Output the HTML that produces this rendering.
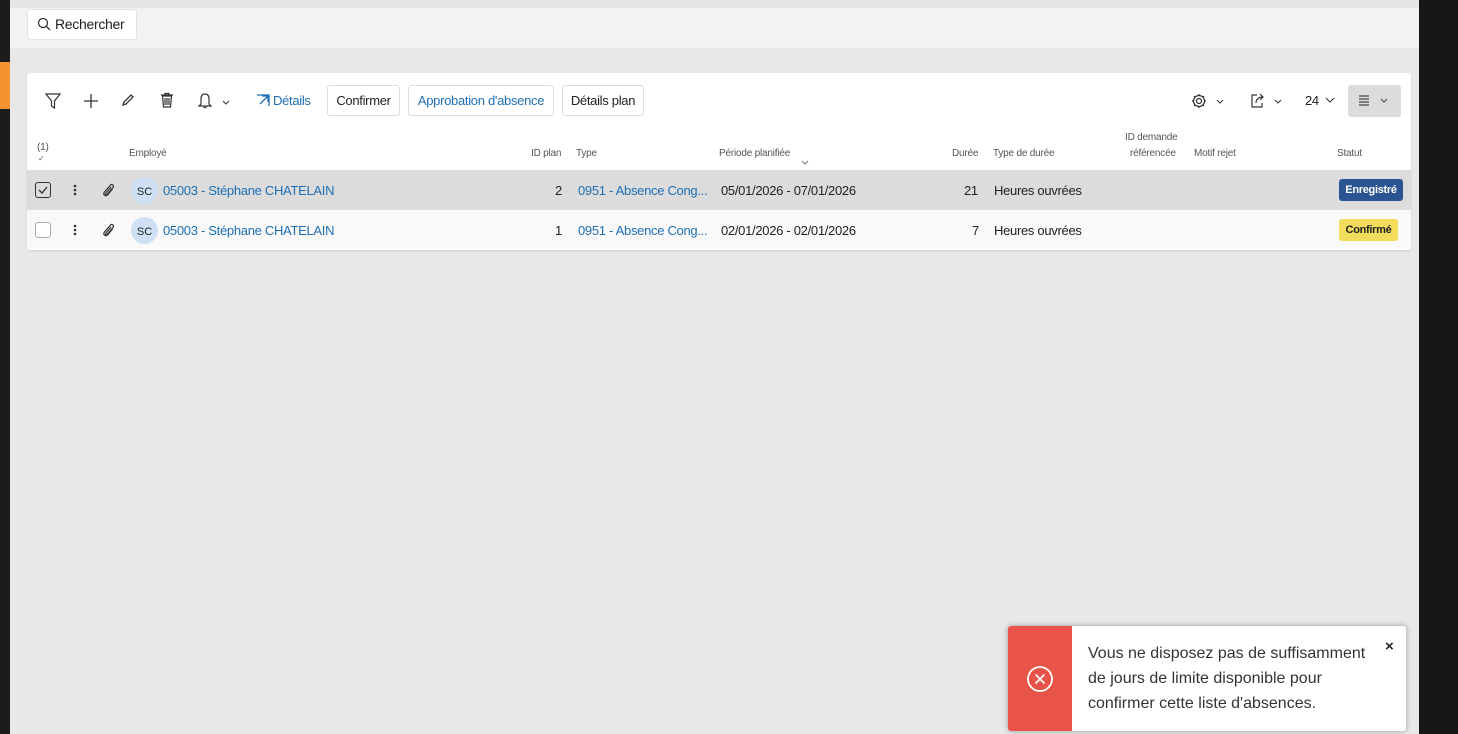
<!DOCTYPE html>
<html><head><meta charset="utf-8"><style>
*{box-sizing:border-box;margin:0;padding:0}
body{width:1458px;height:734px;overflow:hidden;background:#e8e8e8;font-family:"Liberation Sans",sans-serif;position:relative;color:#222}
.abs{position:absolute}
.t{position:absolute;white-space:nowrap;font-size:13px;letter-spacing:-0.3px}
.h{position:absolute;white-space:nowrap;font-size:10px;color:#555;letter-spacing:-0.2px}
.link{color:#1f6fb5}
.btn{position:absolute;top:85px;height:31px;border:1px solid #ddd;border-radius:3px;background:#fff;font-size:13px;line-height:29px;text-align:center;letter-spacing:-0.3px}
</style></head><body>
<div class="abs" style="left:0;top:0;width:10px;height:734px;background:#1c1c1c"></div>
<div class="abs" style="left:0;top:62px;width:10px;height:47px;background:#f6922f"></div>
<div class="abs" style="left:1419px;top:0;width:39px;height:734px;background:#161816"></div>
<div class="abs" style="left:10px;top:0;width:1409px;height:8px;background:#e6e6e6"></div>
<div class="abs" style="left:10px;top:8px;width:1409px;height:40px;background:#f2f2f3"></div>
<div class="abs" style="left:27px;top:9px;width:110px;height:31px;background:#fff;border:1px solid #e2e2e2;border-radius:3px;font-size:14px;line-height:29px;padding-left:27px;letter-spacing:-0.3px">Rechercher</div>
<svg class="abs" style="left:37px;top:17px" width="14" height="14" viewBox="0 0 14 14" fill="none" stroke="#333" stroke-width="1.3"><circle cx="6" cy="6" r="4.5"/><path d="M9.3 9.3L13 13"/></svg>

<div class="abs" style="left:27px;top:73px;width:1384px;height:177px;background:#fff;border-radius:3px;box-shadow:0 1px 2px rgba(0,0,0,.1)"></div>
<svg class="abs" style="left:44px;top:92px" width="18" height="18" viewBox="0 0 18 18" fill="none" stroke="#333" stroke-width="1.2"><path d="M2 2h14l-5.5 7v7l-3-2V9z"/></svg>
<svg class="abs" style="left:82px;top:92px" width="18" height="18" viewBox="0 0 18 18" stroke="#333" stroke-width="1.3"><path d="M9 2v14M2 9h14"/></svg>
<svg class="abs" style="left:120px;top:92px" width="16" height="16" viewBox="0 0 16 16" fill="none" stroke="#333" stroke-width="1.3"><path d="M3 13l1-3 7-7 2 2-7 7z"/></svg>
<svg class="abs" style="left:159px;top:92px" width="16" height="17" viewBox="0 0 16 17" fill="none" stroke="#333" stroke-width="1.2"><path d="M2 3h12M6 3V1.5h4V3M3.5 4h9l-1 11h-7z"/><path d="M6 6v7M8 6v7M10 6v7"/></svg>
<svg class="abs" style="left:197px;top:92px" width="36" height="18" viewBox="0 0 36 18" fill="none" stroke="#333" stroke-width="1.2"><path d="M8 2c-3 0-4 2-4 5v5l-2 2h12l-2-2V7c0-3-1-5-4-5zM6.5 15.5h3"/><path d="M26 9l3 3 3-3" stroke-width="1"/></svg>
<svg class="abs" style="left:256px;top:94px" width="14" height="13" viewBox="0 0 14 13" fill="none" stroke="#1f6fb5" stroke-width="1.3"><path d="M1 1h12v11M4 10l8-8M6 2h6v6"/></svg>
<div class="t link" style="left:273px;top:93px">Détails</div>
<div class="btn" style="left:327px;width:73px">Confirmer</div>
<div class="btn link" style="left:408px;width:146px">Approbation d'absence</div>
<div class="btn" style="left:562px;width:82px">Détails plan</div>

<svg class="abs" style="left:1190px;top:92px" width="40" height="18" viewBox="0 0 40 18" fill="none" stroke="#333" stroke-width="1.2"><circle cx="9" cy="9" r="2.5"/><circle cx="9" cy="9" r="5.5"/><path d="M9 2v1.5M9 14.5V16M2 9h1.5M14.5 9H16M4 4l1.2 1.2M12.8 12.8L14 14M4 14l1.2-1.2M12.8 5.2L14 4"/><path d="M27 8l3 3 3-3" stroke-width="1"/></svg>
<svg class="abs" style="left:1249px;top:92px" width="40" height="18" viewBox="0 0 40 18" fill="none" stroke="#333" stroke-width="1.2"><path d="M8 3H3v12h10v-4M7 11c0-4 3-6 7-6M11 2l3 3-3 3"/><path d="M26 8l3 3 3-3" stroke-width="1"/></svg>
<div class="t" style="left:1305px;top:93px">24</div>
<svg class="abs" style="left:1325px;top:96px" width="10" height="8" viewBox="0 0 10 8" fill="none" stroke="#333"><path d="M1 2l4 4 4-4"/></svg>
<div class="abs" style="left:1348px;top:85px;width:53px;height:32px;background:#dcdcdc;border-radius:3px"></div>
<svg class="abs" style="left:1358px;top:94px" width="34" height="14" viewBox="0 0 34 14" fill="none" stroke="#444" stroke-width="1.2"><path d="M1 2h10M1 5h10M1 8h10M1 11h10"/><path d="M23 5l3 3 3-3" stroke-width="1"/></svg>

<div class="h" style="left:37px;top:142px">(1)</div>
<div class="h" style="left:38px;top:154px;font-size:8px">✓</div>
<div class="h" style="left:129px;top:148px">Employé</div>
<div class="h" style="left:531px;top:148px">ID plan</div>
<div class="h" style="left:576px;top:148px">Type</div>
<div class="h" style="left:719px;top:148px">Période planifiée</div>
<svg class="abs" style="left:801px;top:160px" width="8" height="6" viewBox="0 0 8 6" fill="none" stroke="#777"><path d="M1 1l3 3 3-3"/></svg>
<div class="h" style="left:952px;top:148px">Durée</div>
<div class="h" style="left:993px;top:148px">Type de durée</div>
<div class="h" style="left:1125px;top:132px">ID demande</div>
<div class="h" style="left:1130px;top:148px">référencée</div>
<div class="h" style="left:1194px;top:148px">Motif rejet</div>
<div class="h" style="left:1337px;top:148px">Statut</div>

<div class="abs" style="left:27px;top:170px;width:1384px;height:40px;background:#dcdcdc"></div>
<div class="abs" style="left:27px;top:210px;width:1384px;height:39px;background:#f9f9f9"></div>

<div class="abs" style="left:35px;top:182px;width:16px;height:16px;border:1.3px solid #333;border-radius:3px"></div>
<svg class="abs" style="left:37px;top:184px" width="12" height="12" viewBox="0 0 12 12" fill="none" stroke="#333" stroke-width="1.3"><path d="M2 6l3 3 5-6"/></svg>
<div class="abs" style="left:35px;top:222px;width:16px;height:16px;border:1px solid #aaa;border-radius:3px;background:#fff"></div>

<svg class="abs" style="left:72px;top:183px" width="6" height="14" viewBox="0 0 6 14" fill="#333"><circle cx="3" cy="3" r="1.3"/><circle cx="3" cy="7" r="1.3"/><circle cx="3" cy="11" r="1.3"/></svg>
<svg class="abs" style="left:72px;top:223px" width="6" height="14" viewBox="0 0 6 14" fill="#333"><circle cx="3" cy="3" r="1.3"/><circle cx="3" cy="7" r="1.3"/><circle cx="3" cy="11" r="1.3"/></svg>
<svg class="abs" style="left:101px;top:182px" width="14" height="16" viewBox="0 0 14 16" fill="none" stroke="#333" stroke-width="1.2"><path d="M10 5l-5 6c-1 1 0 2.5 1 1.5l6-7c1.5-1.8-1-4-2.5-2.5l-6 7c-2 2.5 1 5 3 3l5-6"/></svg>
<svg class="abs" style="left:101px;top:222px" width="14" height="16" viewBox="0 0 14 16" fill="none" stroke="#333" stroke-width="1.2"><path d="M10 5l-5 6c-1 1 0 2.5 1 1.5l6-7c1.5-1.8-1-4-2.5-2.5l-6 7c-2 2.5 1 5 3 3l5-6"/></svg>

<div class="abs" style="left:131px;top:177px;width:27px;height:27px;border-radius:50%;background:#cfe0f5;font-size:11px;line-height:28px;text-align:center;padding-top:1px">SC</div>
<div class="abs" style="left:131px;top:217px;width:27px;height:27px;border-radius:50%;background:#cfe0f5;font-size:11px;line-height:28px;text-align:center;padding-top:1px">SC</div>
<div class="t link" style="left:163px;top:183px">05003 - Stéphane CHATELAIN</div>
<div class="t link" style="left:163px;top:223px">05003 - Stéphane CHATELAIN</div>
<div class="t" style="left:555px;top:183px">2</div>
<div class="t" style="left:555px;top:223px">1</div>
<div class="t link" style="left:578px;top:183px">0951 - Absence Cong...</div>
<div class="t link" style="left:578px;top:223px">0951 - Absence Cong...</div>
<div class="t" style="left:721px;top:183px">05/01/2026 - 07/01/2026</div>
<div class="t" style="left:721px;top:223px">02/01/2026 - 02/01/2026</div>
<div class="t" style="left:964px;top:183px">21</div>
<div class="t" style="left:972px;top:223px">7</div>
<div class="t" style="left:994px;top:183px">Heures ouvrées</div>
<div class="t" style="left:994px;top:223px">Heures ouvrées</div>
<div class="abs" style="left:1339px;top:179px;width:64px;height:22px;background:#2b5592;color:#fff;border-radius:3px;font-size:11px;font-weight:bold;line-height:22px;text-align:center;letter-spacing:-0.3px">Enregistré</div>
<div class="abs" style="left:1339px;top:219px;width:59px;height:22px;background:#f1dc5b;color:#222;border-radius:3px;font-size:11px;font-weight:bold;line-height:22px;text-align:center;letter-spacing:-0.3px">Confirmé</div>

<div class="abs" style="left:1008px;top:626px;width:398px;height:105px;background:#fff;border-radius:3px;box-shadow:0 0 6px rgba(0,0,0,.35);overflow:hidden">
<div class="abs" style="left:0;top:0;width:64px;height:105px;background:#e8534a"></div>
<svg class="abs" style="left:18px;top:39px" width="28" height="28" viewBox="0 0 28 28" fill="none" stroke="#fff" stroke-width="1.8"><circle cx="14" cy="14" r="12"/><path d="M9.5 9.5l9 9M18.5 9.5l-9 9"/></svg>
<div class="abs" style="left:80px;top:15px;font-size:16px;line-height:25px;color:#333">Vous ne disposez pas de suffisamment<br>de jours de limite disponible pour<br>confirmer cette liste d'absences.</div>
<div class="abs" style="left:377px;top:12px;font-size:15px;font-weight:bold;color:#222">×</div>
</div>
</body></html>
